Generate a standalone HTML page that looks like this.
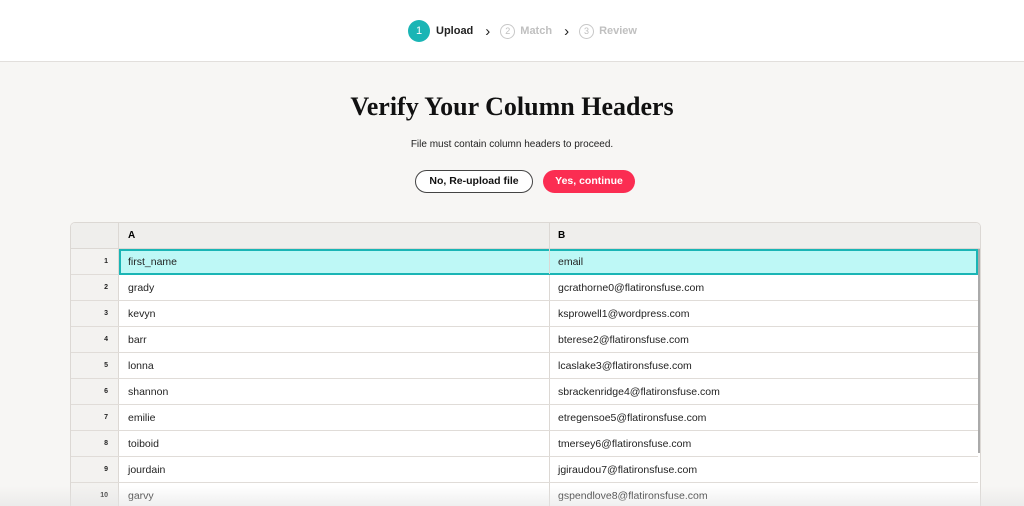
<!DOCTYPE html>
<html style="overflow:hidden;height:506px"><head><meta charset="utf-8"><style>
*{box-sizing:border-box;margin:0;padding:0}
html,body{overflow:hidden}
body{width:1024px;height:506px;background:#f7f6f4;font-family:"Liberation Sans",sans-serif;position:relative}
.top{position:absolute;left:0;top:0;width:1024px;height:62px;background:#fff;border-bottom:1px solid #e2dfdc}
.steps{position:absolute;top:20px;left:408px;display:flex;align-items:center;font-size:11px;font-weight:bold}
.c1{width:22px;height:22px;border-radius:50%;background:#1ab5b5;color:#fff;display:flex;align-items:center;justify-content:center;font-weight:normal;font-size:11px}
.c{width:15px;height:15px;border-radius:50%;border:1px solid #c8c8c8;color:#c0c0c0;display:flex;align-items:center;justify-content:center;font-weight:normal;font-size:9px}
h1{position:absolute;top:92px;width:100%;text-align:center;font-family:"Liberation Serif",serif;font-size:26px;font-weight:bold;color:#111}
.sub{position:absolute;top:139px;width:100%;text-align:center;font-size:10px;color:#222}
.b1{position:absolute;left:415px;top:170px;width:118px;height:23px;border:1px solid #444;border-radius:12px;background:#fff;font-size:10.5px;font-weight:bold;text-align:center;line-height:21px;color:#111}
.b2{position:absolute;left:543px;top:170px;width:92px;height:23px;border-radius:12px;background:#fb2d52;font-size:10.5px;font-weight:bold;text-align:center;line-height:23px;color:#fff}
.tbl{position:absolute;left:70px;top:222px;width:911px;height:284px;border:1px solid #dcd8d4;border-bottom:none;border-radius:5px 5px 0 0;background:#fff;overflow:hidden}
.hdr{position:absolute;left:0;top:0;width:100%;height:26px;background:#efeeec;border-bottom:1px solid #dcd8d4}
.row{position:absolute;left:0;width:907px;height:26px;border-bottom:1px solid #e0dcd8;font-size:10.5px;color:#222}
.n{position:absolute;left:0;width:48px;height:100%;background:#f3f2f0;border-right:1px solid #dcd8d4;font-size:7px;font-weight:bold;text-align:right;padding-right:10px;line-height:26px}
.a{position:absolute;left:57px;line-height:26px}
.bb{position:absolute;left:487px;line-height:26px}
.vl{position:absolute;left:478px;top:0;width:1px;height:100%;background:#dcd8d4}
.hl{background:#bef8f6;border:2px solid #1ab5b5}
.sb{position:absolute;left:907px;top:26px;width:3px;height:204px;background:#aaa}
.fade{position:absolute;left:0;top:486px;width:1024px;height:20px;background:linear-gradient(rgba(240,240,240,0),rgba(228,228,228,.6))}
.ch{margin:0 10px 0 12px;color:#222;font-size:15px;font-weight:normal;line-height:15px}
</style></head><body>
<div class="top"><div class="steps">
<div class="c1">1</div><span style="margin-left:6px;color:#222">Upload</span>
<span class="ch">›</span>
<div class="c">2</div><span style="margin-left:5px;color:#c0c0c0">Match</span>
<span class="ch">›</span>
<div class="c">3</div><span style="margin-left:5px;color:#c0c0c0">Review</span>
</div></div>
<h1>Verify Your Column Headers</h1>
<div class="sub">File must contain column headers to proceed.</div>
<div class="b1">No, Re-upload file</div>
<div class="b2">Yes, continue</div>
<div class="tbl">
<div class="hdr"><div class="n" style="top:0;background:#efeeec"></div><span class="a" style="font-weight:bold;font-size:10px">A</span><div class="vl"></div><span class="bb" style="font-weight:bold;font-size:10px">B</span></div>
<div class="row" style="top:26px"><div class="n">1</div><div class="hl" style="position:absolute;left:48px;top:0;width:859px;height:26px"></div><span class="a">first_name</span><div class="vl"></div><span class="bb">email</span></div>
<div class="row" style="top:52px"><div class="n">2</div><span class="a">grady</span><div class="vl"></div><span class="bb">gcrathorne0@flatironsfuse.com</span></div>
<div class="row" style="top:78px"><div class="n">3</div><span class="a">kevyn</span><div class="vl"></div><span class="bb">ksprowell1@wordpress.com</span></div>
<div class="row" style="top:104px"><div class="n">4</div><span class="a">barr</span><div class="vl"></div><span class="bb">bterese2@flatironsfuse.com</span></div>
<div class="row" style="top:130px"><div class="n">5</div><span class="a">lonna</span><div class="vl"></div><span class="bb">lcaslake3@flatironsfuse.com</span></div>
<div class="row" style="top:156px"><div class="n">6</div><span class="a">shannon</span><div class="vl"></div><span class="bb">sbrackenridge4@flatironsfuse.com</span></div>
<div class="row" style="top:182px"><div class="n">7</div><span class="a">emilie</span><div class="vl"></div><span class="bb">etregensoe5@flatironsfuse.com</span></div>
<div class="row" style="top:208px"><div class="n">8</div><span class="a">toiboid</span><div class="vl"></div><span class="bb">tmersey6@flatironsfuse.com</span></div>
<div class="row" style="top:234px"><div class="n">9</div><span class="a">jourdain</span><div class="vl"></div><span class="bb">jgiraudou7@flatironsfuse.com</span></div>
<div class="row" style="top:260px"><div class="n">10</div><span class="a">garvy</span><div class="vl"></div><span class="bb">gspendlove8@flatironsfuse.com</span></div>
<div class="sb"></div>
</div>
<div class="fade"></div>
</body></html>
